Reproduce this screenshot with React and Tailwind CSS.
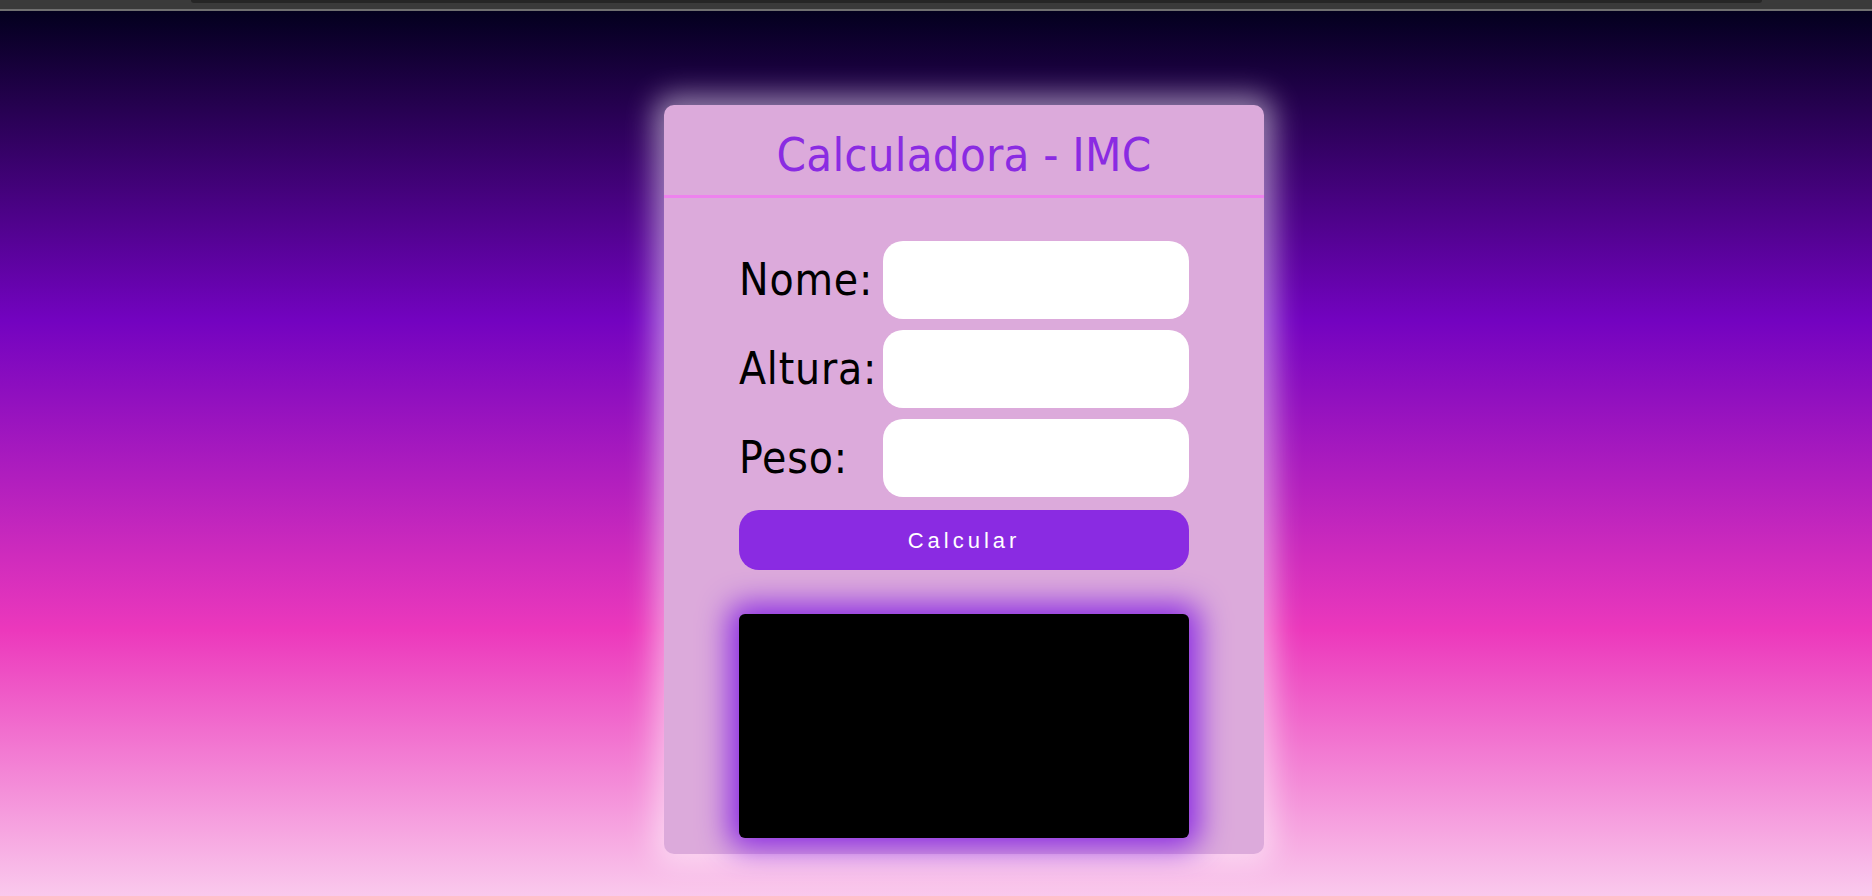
import React from 'react';

const fields = ['Nome:', 'Altura:', 'Peso:'];

export default function App() {
    return (
        <div className="min-h-[896px] w-full bg-[#3c3c3c]">
            {/* browser strip */}
            <div className="h-[9px] bg-[#3a3a3a] flex justify-center">
                <div className="ml-[81px] w-[1571px] h-[3px] bg-[#262626] rounded-b-md" />
            </div>
            <div className="h-[2px] bg-[#707070]" />

            <main className="h-[885px] overflow-hidden flex justify-center pl-[56px] bg-[linear-gradient(to_bottom,#03001e_0%,#7303c0_35%,#ec38bc_70%,#fdeff9_108%)]">
                <div className="mt-[94px] w-[600px] h-[749px] rounded-[10px] bg-[#dcaadb] shadow-[0_0_28px_10px_rgba(255,255,255,0.5)] flex flex-col items-center">
                    <div className="h-[90px] w-full flex items-center justify-center">
                        <h1 className="text-[47px] text-[#8a2be2] font-['DejaVu_Sans_Condensed','DejaVu_Sans',sans-serif] tracking-[0.2px] leading-none pt-[9px]">
                            Calculadora - IMC
                        </h1>
                    </div>
                    <div className="h-[3px] w-full bg-[#ee82ee]" />

                    <form className="mt-[43px] w-[450px] flex flex-col">
                        <div className="grid grid-cols-[144px_306px] gap-y-[11px] items-center">
                            {fields.map((f) => (
                                <React.Fragment key={f}>
                                    <label className="text-[44px] leading-none text-black font-['DejaVu_Sans_Condensed','DejaVu_Sans',sans-serif] tracking-[0.8px]">
                                        {f}
                                    </label>
                                    <input type="text" className="h-[78px] w-[306px] rounded-[20px] bg-white outline-none px-4" />
                                </React.Fragment>
                            ))}
                        </div>
                        <button type="button" className="mt-[13px] h-[60px] w-full rounded-[20px] bg-[#8a2be2] text-white text-[22px] tracking-[4px] font-['Liberation_Sans',Arial,sans-serif]">
                            Calcular
                        </button>
                        <div className="mt-[44px] h-[224px] w-full rounded-md bg-black shadow-[0_0_30px_10px_#8a2be2]" />
                    </form>
                </div>
            </main>
        </div>
    );
}
